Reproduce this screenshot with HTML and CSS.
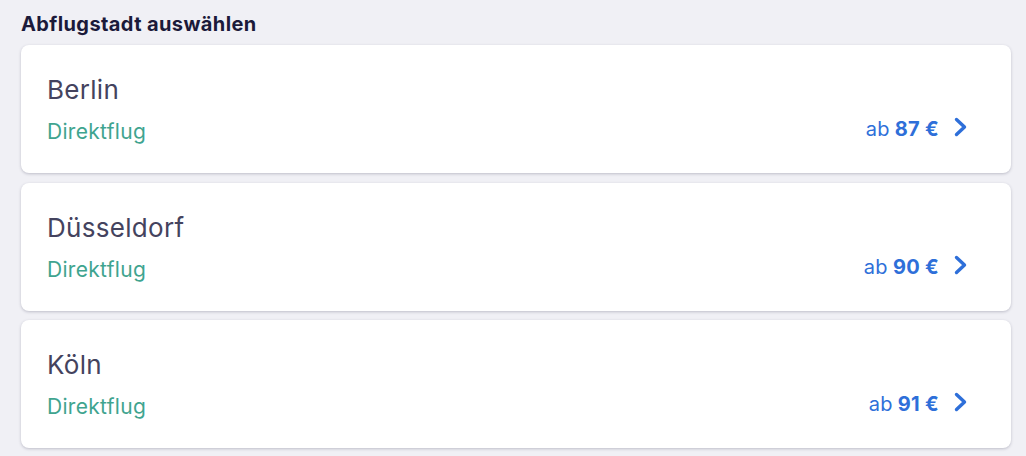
FILE: index.html
```html
<html>
<head>
    <meta charset="utf-8">
    <link rel="stylesheet" href="styles.css">
</head>
<body>
    <div class="page">
        <h2 class="title">Abflugstadt auswählen</h2>
        <div class="list">
            <div class="city">
                <div class="info">
                    <div class="name">Berlin</div>
                    <div class="type">Direktflug</div>
                </div>
                <div class="price">
                    <span class="from">ab</span> <b>87 €</b>
                    <svg class="chevron" viewBox="0 0 13 20" width="13" height="20"><path d="M2.5 2.5L10.5 10L2.5 17.5" fill="none" stroke="currentColor" stroke-width="3.4" stroke-linecap="round" stroke-linejoin="round"/></svg>
                </div>
            </div>
            <div class="city">
                <div class="info">
                    <div class="name">Düsseldorf</div>
                    <div class="type">Direktflug</div>
                </div>
                <div class="price">
                    <span class="from">ab</span> <b>90 €</b>
                    <svg class="chevron" viewBox="0 0 13 20" width="13" height="20"><path d="M2.5 2.5L10.5 10L2.5 17.5" fill="none" stroke="currentColor" stroke-width="3.4" stroke-linecap="round" stroke-linejoin="round"/></svg>
                </div>
            </div>
            <div class="city">
                <div class="info">
                    <div class="name">Köln</div>
                    <div class="type">Direktflug</div>
                </div>
                <div class="price">
                    <span class="from">ab</span> <b>91 €</b>
                    <svg class="chevron" viewBox="0 0 13 20" width="13" height="20"><path d="M2.5 2.5L10.5 10L2.5 17.5" fill="none" stroke="currentColor" stroke-width="3.4" stroke-linecap="round" stroke-linejoin="round"/></svg>
                </div>
            </div>
        </div>
    </div>
</body>
</html>
```

FILE: styles.css
```css
html, body {
    margin: 0px;
    width: 100%;
    height: 100%;
    background: #f0f0f5;
    font-family: Inter, "Noto Sans", sans-serif;
}
.page {
    padding: 12px 15px 0px 21px;
}
.title {
    margin: 0px 0px 9px 0px;
    font-size: 20px;
    line-height: 24px;
    font-weight: 700;
    color: #1b1a3a;
    letter-spacing: 0.4px;
}
.list {
    display: flex;
    flex-direction: column;
    gap: 9.5px;
}
.city {
    display: flex;
    justify-content: space-between;
    align-items: flex-end;
    height: 128px;
    box-sizing: border-box;
    padding: 30px 44px 0px 26px;
    background: #ffffff;
    border-radius: 8px;
    box-shadow: 0px 1px 3px rgba(40, 40, 70, 0.25);
}
.info {
    align-self: flex-start;
}
.name {
    font-size: 26px;
    line-height: 30px;
    color: #44435e;
    letter-spacing: 0.3px;
}
.type {
    margin-top: 15px;
    font-size: 21px;
    line-height: 24px;
    color: #3fa48f;
    letter-spacing: 0.3px;
}
.price {
    display: flex;
    align-items: center;
    margin-bottom: 32px;
    font-size: 20px;
    line-height: 24px;
    color: #2e6fd9;
    letter-spacing: 0.3px;
}
.price b {
    margin-left: 5px;
    font-weight: 700;
}
.chevron {
    margin-left: 15px;
    margin-bottom: 4px;
}
```
